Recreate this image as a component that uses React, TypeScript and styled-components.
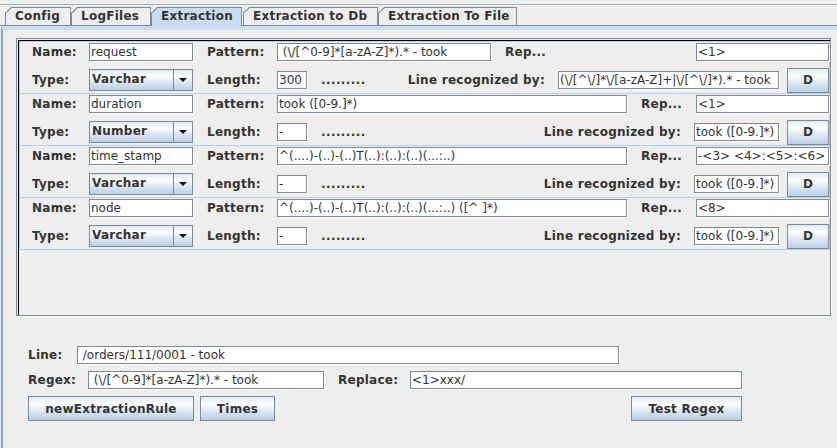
import React from "react";
import styled, { createGlobalStyle, css } from "styled-components";

const GlobalStyle = createGlobalStyle`
  html, body { margin: 0; padding: 0; }
  body {
    background: #eeeeee;
    font-family: "DejaVu Sans", "Liberation Sans", sans-serif;
    font-size: 12px;
    color: #333333;
  }
  * { box-sizing: border-box; }
`;

const oceanGradient = css`
  background: linear-gradient(
    to bottom,
    #dde8f3 0%,
    #ffffff 30%,
    #dde8f3 60%,
    #b8cfe5 100%
  );
`;

const boldText = css`
  font-weight: bold;
  letter-spacing: 0.25px;
  white-space: nowrap;
`;

const Window = styled.div`
  width: 837px;
  height: 448px;
  overflow: hidden;
  background: #eeeeee;
  display: flex;
  flex-direction: column;
`;

const TopEdge = styled.div`
  height: 5px;
  border-bottom: 1px solid #a9b3bd;
`;

const TabStrip = styled.div`
  margin-top: 2px;
  height: 19px;
  display: flex;
  align-items: flex-start;
  padding-left: 5px;
  border-bottom: 1px solid #7a8a99;
`;

const TabOuter = styled.div<{ $active?: boolean; $w: number }>`
  width: ${(p) => p.$w}px;
  height: ${(p) => (p.$active ? 19 : 18)}px;
  margin-right: ${(p) => (p.$active ? 1 : 0)}px;
  background: #7a8a99;
  padding: 1px 1px 0 1px;
  clip-path: polygon(0 6px, 6px 0, 100% 0, 100% 100%, 0 100%);
  position: relative;
  z-index: ${(p) => (p.$active ? 1 : 0)};
`;

const TabFace = styled.div<{ $active?: boolean }>`
  height: 100%;
  background: ${(p) => (p.$active ? "#c8ddf2" : "#eeeeee")};
  clip-path: polygon(0 5.6px, 5.6px 0, 100% 0, 100% 100%, 0 100%);
  padding-left: 9px;
  line-height: 17px;
  ${boldText}
`;

const TabBody = styled.div`
  flex: 1;
  margin-left: 1px;
  border-left: 2px solid #8da4c4;
  border-top: 4px solid #c8ddf2;
  padding: 8px 0 0 13px;
  display: flex;
  flex-direction: column;
`;

const ScrollPane = styled.div`
  width: 815px;
  height: 278px;
  border: 1px solid #7a8a99;
  box-shadow: 1px 1px 0 #ffffff;
  padding: 1px 0 0 1px;
  display: flex;
`;

const Viewport = styled.div`
  flex: 1;
  border-top: 1px solid #000000;
  border-left: 1px solid #000000;
  display: flex;
  flex-direction: column;
`;

const RulePanel = styled.div<{ $first?: boolean }>`
  border: 1px solid #b8cfe5;
  border-top: ${(p) => (p.$first ? "1px solid #b8cfe5" : "none")};
  width: 811px;
  padding-left: 12px;
  display: flex;
  flex-direction: column;
`;

const NameRow = styled.div`
  height: 20px;
  display: flex;
  align-items: center;
`;

const TypeRow = styled.div`
  margin-top: 5px;
  height: 26px;
  display: flex;
  align-items: center;
`;

const Label = styled.span<{ $w?: number; $ml?: number; $right?: boolean }>`
  ${boldText}
  flex: none;
  ${(p) => (p.$w ? `width: ${p.$w}px;` : "")}
  ${(p) => (p.$ml !== undefined ? `margin-left: ${p.$ml}px;` : "")}
  ${(p) => (p.$right ? "margin-left: auto;" : "")}
`;

const Field = styled.div<{ $w: number; $h?: number; $ml?: number; $push?: boolean }>`
  flex: none;
  width: ${(p) => p.$w}px;
  height: ${(p) => p.$h ?? 18}px;
  ${(p) => (p.$ml !== undefined ? `margin-left: ${p.$ml}px;` : "")}
  ${(p) => (p.$push ? "margin-left: auto;" : "")}
  background: #ffffff;
  border: 1px solid #7a8a99;
  box-shadow: 1px 1px 0 #ffffff;
  padding: 0 1px;
  line-height: ${(p) => (p.$h ?? 18) - 2}px;
  white-space: pre;
  overflow: hidden;
  color: #333333;
`;

const Combo = styled.div`
  flex: none;
  width: 104px;
  height: 22px;
  border: 1px solid #7a8a99;
  display: flex;
  ${oceanGradient}
`;

const ComboText = styled.div`
  flex: 1;
  padding-left: 2px;
  line-height: 18px;
  ${boldText}
`;

const ComboArrow = styled.div`
  width: 19px;
  border-left: 1px solid #7a8a99;
  display: flex;
  align-items: center;
  justify-content: center;
`;

const Dots = styled.span`
  ${boldText}
  margin-left: 14px;
  letter-spacing: 0.4px;
`;

const Button = styled.div<{ $w: number; $ml?: number }>`
  flex: none;
  width: ${(p) => p.$w}px;
  height: 25px;
  ${(p) => (p.$ml !== undefined ? `margin-left: ${p.$ml}px;` : "")}
  border: 1px solid #7a8a99;
  ${oceanGradient}
  ${boldText}
  display: flex;
  align-items: center;
  justify-content: center;
`;

const Form = styled.div`
  margin-top: 30px;
  margin-left: 12px;
  display: flex;
  flex-direction: column;
  gap: 7px;
`;

const FormRow = styled.div`
  display: flex;
  align-items: center;
  height: 18px;
`;

const ButtonRow = styled.div`
  display: flex;
  align-items: center;
`;

type Rule = {
  name: string;
  pattern: string;
  patternW: number;
  rep: string;
  type: string;
  length: string;
  line: string;
  lineW: number;
};

const rules: Rule[] = [
  {
    name: "request",
    pattern: " (\\/[^0-9]*[a-zA-Z]*).* - took",
    patternW: 214,
    rep: "<1>",
    type: "Varchar",
    length: "300",
    line: "(\\/[^\\/]*\\/[a-zA-Z]+|\\/[^\\/]*).* - took",
    lineW: 221,
  },
  {
    name: "duration",
    pattern: "took ([0-9.]*)",
    patternW: 350,
    rep: "<1>",
    type: "Number",
    length: "-",
    line: "took ([0-9.]*)",
    lineW: 85,
  },
  {
    name: "time_stamp",
    pattern: "^(....)-(..)-(..)T(..):(..):(..)(...:..)",
    patternW: 350,
    rep: "-<3> <4>:<5>:<6>",
    type: "Varchar",
    length: "-",
    line: "took ([0-9.]*)",
    lineW: 85,
  },
  {
    name: "node",
    pattern: "^(....)-(..)-(..)T(..):(..):(..)(...:..) ([^ ]*)",
    patternW: 350,
    rep: "<8>",
    type: "Varchar",
    length: "-",
    line: "took ([0-9.]*)",
    lineW: 85,
  },
];

const tabs: { label: string; w: number }[] = [
  { label: "Config", w: 66 },
  { label: "LogFiles", w: 80 },
  { label: "Extraction", w: 91 },
  { label: "Extraction to Db", w: 135 },
  { label: "Extraction To File", w: 139 },
];

const DownArrow = () => (
  <svg width="8" height="4" viewBox="0 0 8 4">
    <path d="M0 0 H8 L4 4 Z" fill="#111111" />
  </svg>
);

export default function App() {
  return (
    <Window>
      <GlobalStyle />
      <TopEdge />
      <TabStrip>
        {tabs.map((t) => (
          <TabOuter key={t.label} $w={t.w} $active={t.label === "Extraction"}>
            <TabFace $active={t.label === "Extraction"}>{t.label}</TabFace>
          </TabOuter>
        ))}
      </TabStrip>
      <TabBody>
        <ScrollPane>
          <Viewport>
            {rules.map((r, i) => (
              <RulePanel key={r.name} $first={i === 0}>
                <NameRow>
                  <Label $w={57}>Name:</Label>
                  <Field $w={104}>{r.name}</Field>
                  <Label $w={70} $ml={14}>
                    Pattern:
                  </Label>
                  <Field $w={r.patternW}>{r.pattern}</Field>
                  <Label $ml={14}>Rep...</Label>
                  <Field $w={133} $push>
                    {r.rep}
                  </Field>
                </NameRow>
                <TypeRow>
                  <Label $w={57}>Type:</Label>
                  <Combo>
                    <ComboText>{r.type}</ComboText>
                    <ComboArrow>
                      <DownArrow />
                    </ComboArrow>
                  </Combo>
                  <Label $w={70} $ml={14}>
                    Length:
                  </Label>
                  <Field $w={30}>{r.length}</Field>
                  <Dots>.........</Dots>
                  <Label $right>Line recognized by:</Label>
                  <Field $w={r.lineW} $ml={13}>
                    {r.line}
                  </Field>
                  <Button $w={42} $ml={8}>
                    D
                  </Button>
                </TypeRow>
              </RulePanel>
            ))}
          </Viewport>
        </ScrollPane>
        <Form>
          <FormRow>
            <Label $w={49}>Line:</Label>
            <Field $w={542}> /orders/111/0001 - took</Field>
          </FormRow>
          <FormRow>
            <Label $w={60}>Regex:</Label>
            <Field $w={236}> (\/[^0-9]*[a-zA-Z]*).* - took</Field>
            <Label $w={72} $ml={14}>
              Replace:
            </Label>
            <Field $w={332}>{"<1>xxx/"}</Field>
          </FormRow>
          <ButtonRow>
            <Button $w={166}>newExtractionRule</Button>
            <Button $w={75} $ml={6}>
              Times
            </Button>
            <Button $w={111} $ml={356}>
              Test Regex
            </Button>
          </ButtonRow>
        </Form>
      </TabBody>
    </Window>
  );
}
